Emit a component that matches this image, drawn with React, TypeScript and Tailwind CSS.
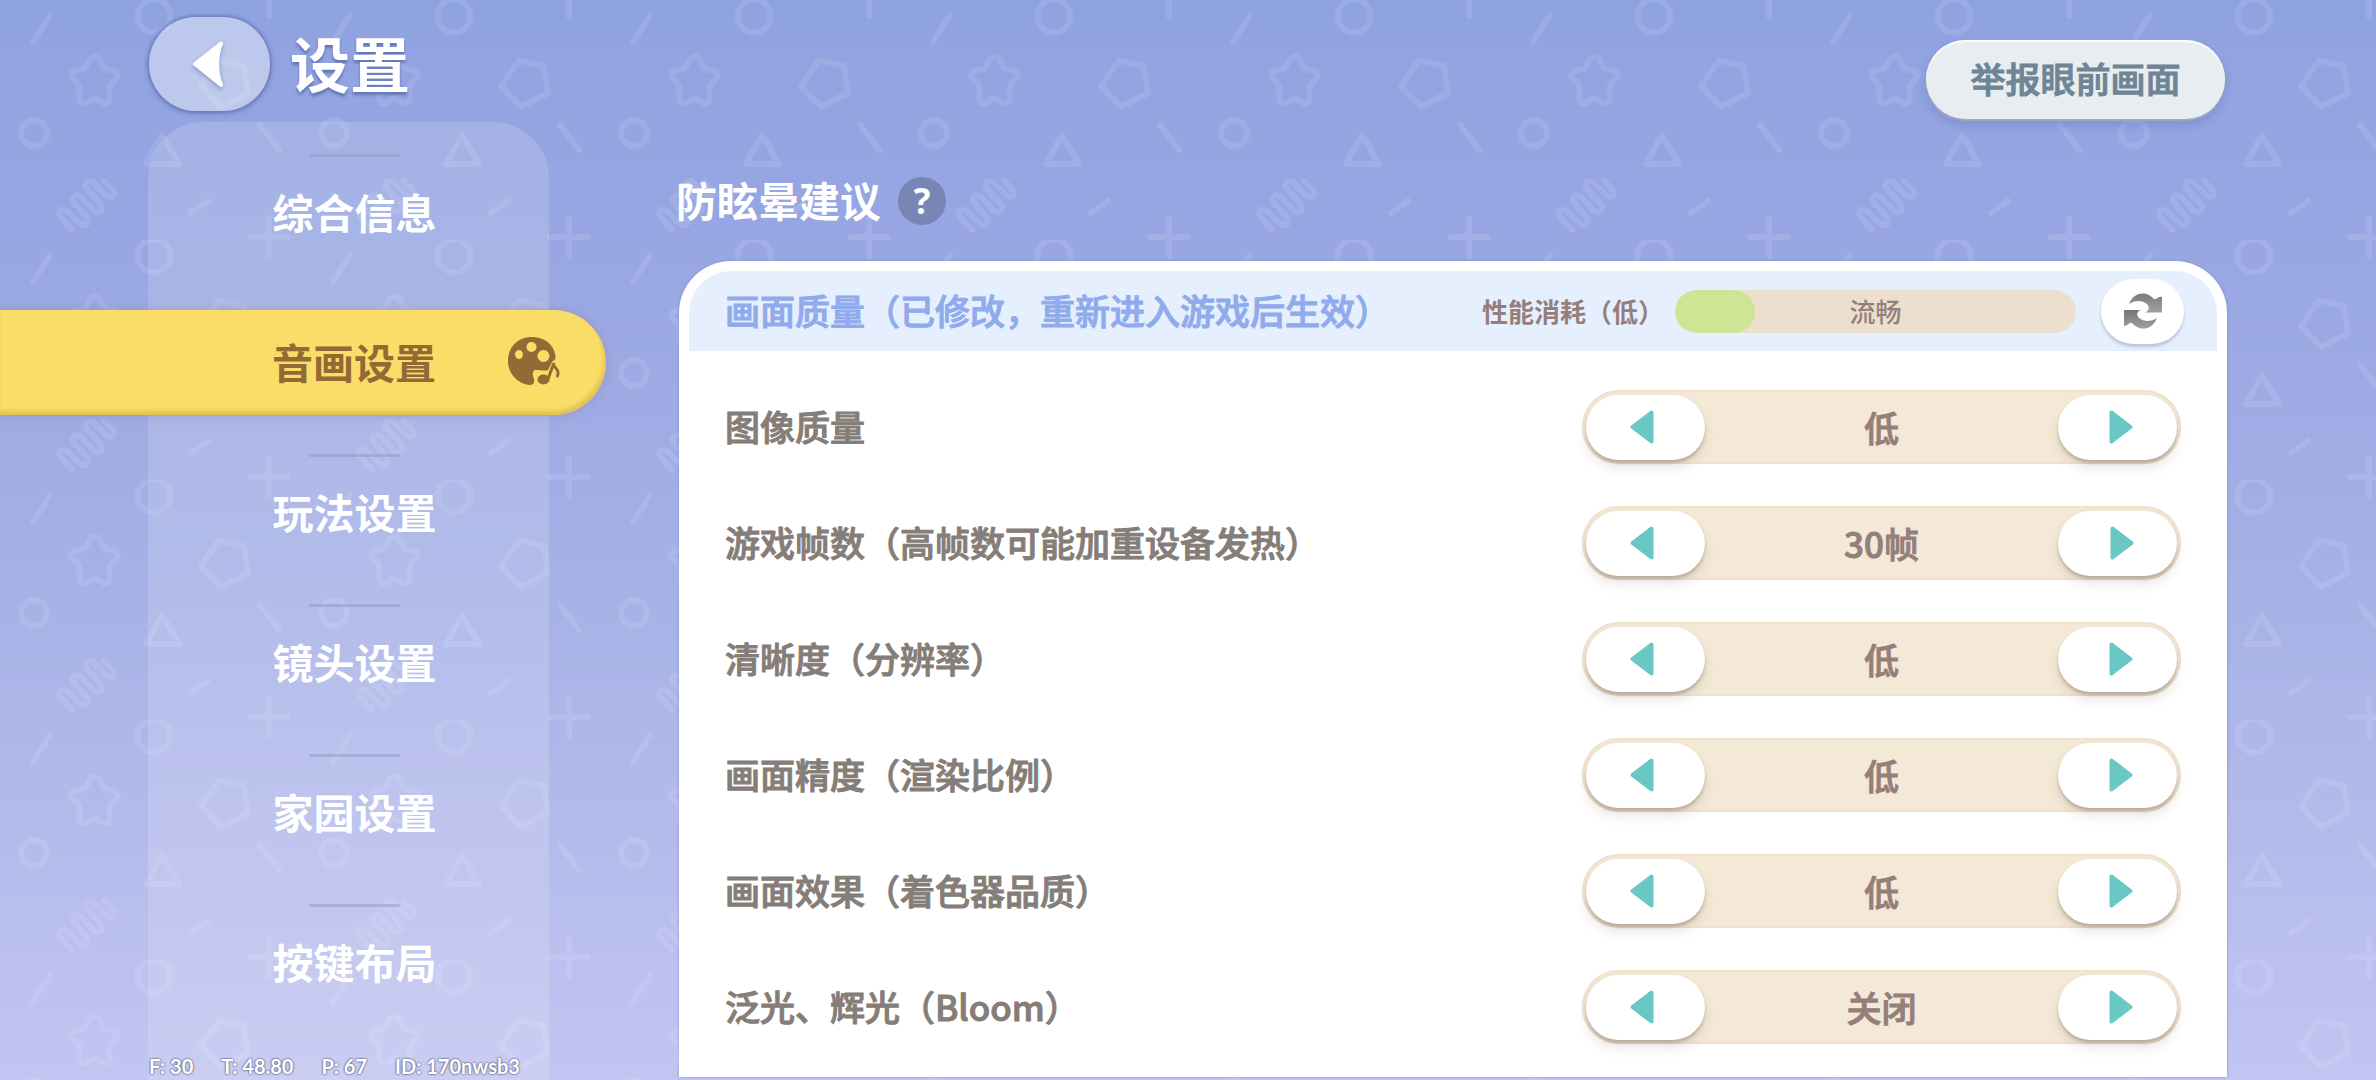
import React, { useState } from 'react';
import clsx from 'clsx';

const menuItems = ['综合信息', '音画设置', '玩法设置', '镜头设置', '家园设置', '按键布局'];

const levels = ['低', '中', '高'];

const settings = [
  { label: '图像质量', options: levels },
  { label: '游戏帧数（高帧数可能加重设备发热）', options: ['30帧', '45帧', '60帧'] },
  { label: '清晰度（分辨率）', options: levels },
  { label: '画面精度（渲染比例）', options: levels },
  { label: '画面效果（着色器品质）', options: levels },
  { label: '泛光、辉光（Bloom）', options: ['关闭', '开启'] },
];

const Backdrop: React.FC = () => (
  <svg className="absolute inset-0 h-full w-full" aria-hidden="true">
    <defs>
      <pattern id="doodles" width="300" height="240" patternUnits="userSpaceOnUse">
        <g fill="none" stroke="#fff" strokeWidth="6" strokeLinecap="round" strokeLinejoin="round">
          <circle cx="154" cy="16" r="16.5" />
          <path d="M50 15L33 42" />
          <path d="M269 -22V16M250 -3H288M269 218V256M250 237H288" />
          <path d="M94.5 56.5C98 56.5 99.5 59 101 62.5C103 68 105 69.5 110 70C117 70.500 120 74 116 78.500C110 84 108.500 87 109.500 93C111 103 107 105.500 101 102C97 99.500 95 98 94.500 98C94 98 92 99.500 88 102C82 105.500 78 103 79.500 93C80.500 87 79 84 73 78.500C69 74 72 70.500 79 70C84 69.500 86 68 88 62.500C89.500 59 91 56.500 94.500 56.500Z" />
          <path d="M219 60.500L244 66L248 93L221 107L201 86Z" />
          <path d="M162 135L146 164H179Z" />
          <path d="M260 125L279 150" />
          <circle cx="34" cy="133" r="13" />
          <path d="M191 213L208 201" />
          <path d="M72 230L61 218C55 211 63 207 68 212L78 222C85 229 92 223 86 216L74 203C69 197 77 192 82 198L92 209C98 216 106 210 100 203L87 189C82 182 90 178 95 184L106 195C112 200 117 195 112 189L104 181" />
        </g>
      </pattern>
    </defs>
    <rect width="100%" height="100%" fill="url(#doodles)" opacity="0.1" />
  </svg>
);

const PaletteIcon: React.FC = () => (
  <svg className="h-[50px] w-[54px]" viewBox="0 0 54 50" aria-hidden="true">
    <path
      fill="#936a35"
      fillRule="evenodd"
      d="M24.500 1C11 1 1 11 1 25C1 38 11 48 23 49C27 49 27.500 46 27 43C26 40 25 37 27 34.500C29 33 37 35.500 41 34L45 26C46 24 49 25 48.500 20C47 8 37 1 24.500 1ZM12 14A4 4.500 0 1 0 12 23A4 4.500 0 1 0 12 14ZM24.500 6A5 5 0 1 0 24.500 16A5 5 0 1 0 24.500 6ZM36.500 14A6 6 0 1 0 36.500 26A6 6 0 1 0 36.500 14Z"
    />
    <ellipse cx="36.500" cy="43.500" rx="6" ry="5" fill="#936a35" />
    <path d="M41 43L46.500 28C48 34 53 33 50.500 40" fill="none" stroke="#936a35" strokeWidth="3" strokeLinecap="round" strokeLinejoin="round" />
  </svg>
);

const RefreshIcon: React.FC = () => (
  <svg className="h-9 w-[38px]" viewBox="0 0 38 36" aria-hidden="true">
    <defs>
      <linearGradient id="refresh-top" x1="0" y1="0" x2="0" y2="1">
        <stop offset="0" stopColor="#7c7c7c" />
        <stop offset="1" stopColor="#a0a0a0" />
      </linearGradient>
      <linearGradient id="refresh-bottom" x1="0" y1="0" x2="0" y2="1">
        <stop offset="0" stopColor="#757575" />
        <stop offset="1" stopColor="#a0a0a0" />
      </linearGradient>
    </defs>
    <path d="M5 11C8 3 14 0 20 0.500C25 1 28 4 30 6C33 7 34 3 38 4V19.500H21C25 18 26 14 23 11C18 7 11 7 5 11Z" fill="url(#refresh-top)" />
    <path d="M33 25C30 33 24 36 18 35.500C13 35 10 32 8 30C5 29 4 33 0 33V17H17C13 18 12 22 15 25C20 29 27 29 33 25Z" fill="url(#refresh-bottom)" />
  </svg>
);

const Triangle: React.FC<{ flip?: boolean }> = ({ flip }) => (
  <svg className={clsx('h-9 w-6', flip && 'rotate-180')} viewBox="0 0 24 36" aria-hidden="true">
    <path d="M21.500 3.500V32.500L2.500 18Z" fill="#69c8c4" stroke="#69c8c4" strokeWidth="4" strokeLinejoin="round" />
  </svg>
);

const stepButton =
  'flex h-[65px] w-[119px] items-center justify-center rounded-full bg-white shadow-[0_3px_3px_rgba(120,100,80,0.35),0_8px_12px_rgba(120,100,80,0.15)]';

const Selector: React.FC<{ label: string; options: string[] }> = ({ label, options }) => {
  const [index, setIndex] = useState(0);
  const move = (step: number) => setIndex((index + step + options.length) % options.length);

  return (
    <div role="group" aria-label={label} className="flex h-[74px] w-[599px] shrink-0 items-center justify-between rounded-full bg-[#f4e8d6] px-1 shadow-[inset_0_0_3px_1px_#eadcc8]">
      <button type="button" aria-label="上一项" className={clsx(stepButton, 'pr-2')} onClick={() => move(-1)}>
        <Triangle />
      </button>
      <output className="text-[35px] leading-[52px] font-medium text-[#957f7b] [-webkit-text-stroke:1px]">{options[index]}</output>
      <button type="button" aria-label="下一项" className={clsx(stepButton, 'pl-2')} onClick={() => move(1)}>
        <Triangle flip />
      </button>
    </div>
  );
};

const App: React.FC = () => {
  const [active, setActive] = useState('音画设置');

  return (
    <div className="relative flex h-screen overflow-hidden bg-[linear-gradient(180deg,#8fa2e0_0%,#9aa8e3_28%,#a4b0e6_52%,#b1b9ea_73%,#c2c5f1_100%)] font-['Noto_Sans_CJK_SC',sans-serif]">
      <Backdrop />

      <aside className="relative flex w-[606px] shrink-0 flex-col">
        <header className="flex items-center gap-5 pt-[17px] pb-[11px] pl-[149px]">
          <button type="button" aria-label="返回" className="flex h-[94px] w-[121px] items-center justify-center rounded-full bg-white/40 pr-1 shadow-[0_0_3px_2px_rgba(80,95,160,0.45),0_3px_6px_rgba(80,95,160,0.3)]">
            <svg className="h-12 w-8 drop-shadow-[0_2px_2px_rgba(80,95,160,0.5)]" viewBox="0 0 32 48" aria-hidden="true">
              <path d="M29 3.500C24 16 24 33 29 45L3 24Z" fill="#fff" stroke="#fff" strokeWidth="4" strokeLinejoin="round" />
            </svg>
          </button>
          <h1 className="pb-1 text-[60px] leading-[88px] font-bold text-white [text-shadow:0_3px_3px_rgba(70,85,150,0.6)]">设置</h1>
        </header>

        <nav className="ml-[148px] w-[401px] grow rounded-t-[56px] bg-white/15 pt-8 pl-3">
          <ul>
            {menuItems.map((item) => (
              <li key={item} className="h-[150px]">
                <div className={clsx('mx-auto mb-[3px] h-[3px] w-[91px] rounded-full', item !== active && 'bg-[#8d97c4]/50')} />
                <button
                  type="button"
                  onClick={() => setActive(item)}
                  className={clsx(
                    'flex h-[105px] items-center pb-1 text-[41px] leading-[60px] font-bold',
                    item === active
                      ? '-ml-[160px] w-[606px] justify-between rounded-r-full bg-[#f9dd68] pr-[45px] pl-[272px] text-[#936a35] shadow-[inset_-2px_-4px_4px_#e0c154,0_0_10px_rgba(150,130,150,0.5)]'
                      : 'w-full justify-center text-white'
                  )}
                >
                  {item}
                  {item === active && <PaletteIcon />}
                </button>
              </li>
            ))}
          </ul>
        </nav>
      </aside>

      <main className="relative mr-[149px] ml-[73px] flex min-w-0 grow flex-col pt-10 pb-[3px]">
        <button type="button" className="mr-[2px] h-[79px] w-[299px] self-end rounded-full bg-[#e8edf1] pb-1 text-[35px] leading-[52px] font-medium text-[#6f8494] shadow-[inset_0_2px_2px_#fff,0_2px_2px_#a2aac2,0_6px_10px_rgba(80,95,160,0.3)] [-webkit-text-stroke:1px]">
          举报眼前画面
        </button>

        <div className="mt-[52px] mb-[30px] flex h-[60px] items-center gap-[17px]">
          <h2 className="-ml-[3px] pb-1 text-[41px] leading-[60px] font-bold text-white">防眩晕建议</h2>
          <button type="button" aria-label="帮助" className="flex size-12 items-center justify-center rounded-full bg-[#7886b5] font-['Open_Sans',sans-serif] text-[35px] leading-[52px] font-bold text-white">
            ?
          </button>
        </div>

        <section className="grow rounded-t-[52px] bg-white px-[10px] pt-[10px] shadow-[0_0_3px_rgba(120,130,190,0.7)]">
          <div className="flex h-20 items-center rounded-t-[42px] bg-[#e5effe] pr-[33px] pl-9">
            <h3 className="pb-[2px] text-[35px] leading-[52px] font-medium whitespace-nowrap text-[#90abec] [-webkit-text-stroke:1px]">画面质量（已修改，重新进入游戏后生效）</h3>
            <span className="ml-auto text-[26px] leading-[40px] font-bold whitespace-nowrap text-[#957f7b]">性能消耗（低）</span>
            <div role="meter" aria-label="性能消耗" aria-valuenow={20} aria-valuemin={0} aria-valuemax={100} className="relative ml-[11px] flex h-[43px] w-[401px] items-center justify-center overflow-hidden rounded-full bg-[#ecdfcd]">
              <div className="absolute inset-y-0 left-0 w-1/5 rounded-full bg-[#cfe596]" />
              <span className="text-[26px] leading-[40px] font-medium text-[#957f7b]">流畅</span>
            </div>
            <button type="button" aria-label="重置" className="ml-[25px] flex h-[65px] w-[83px] items-center justify-center rounded-full bg-white shadow-[0_3px_3px_rgba(110,120,150,0.35)]">
              <RefreshIcon />
            </button>
          </div>

          <div className="pt-[18px] pr-9 pl-9">
            {settings.map((setting) => (
              <div key={setting.label} className="flex h-[116px] items-center justify-between">
                <span className="pb-[2px] text-[35px] leading-[52px] font-medium text-[#857d78] [-webkit-text-stroke:1px]">{setting.label}</span>
                <Selector label={setting.label} options={setting.options} />
              </div>
            ))}
          </div>
        </section>
      </main>

      <footer className="absolute bottom-0 left-[149px] flex gap-7 font-['Lato',sans-serif] text-[20px] leading-[28px] font-bold text-white [text-shadow:0_0_2px_#555b78,0_0_2px_#555b78]">
        <span>F: 30</span>
        <span>T: 48.80</span>
        <span>P: 67</span>
        <span>ID: 170nwsb3</span>
      </footer>
    </div>
  );
};

export default App;
